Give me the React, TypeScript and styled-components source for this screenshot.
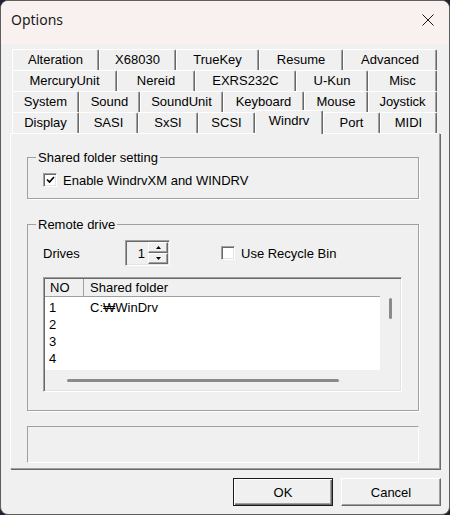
import React from 'react';
import styled, { createGlobalStyle } from 'styled-components';

const GlobalStyle = createGlobalStyle`
  html, body { margin: 0; padding: 0; background: #1b2233; }
  body { width: 450px; height: 515px; overflow: hidden; font-family: "Liberation Sans", Arial, sans-serif; }
  *, *::before, *::after { box-sizing: border-box; }
`;

const Window = styled.div`
  width: 450px;
  height: 515px;
  border: 1px solid #5e5e5e;
  border-radius: 8px;
  overflow: hidden;
  background: #f0f0f0;
  display: flex;
  flex-direction: column;
  color: #000;
  font-size: 13px;
  line-height: 15px;
`;

const TitleBar = styled.div`
  height: 43px;
  flex: none;
  background: #f9f1ef;
  display: flex;
  align-items: center;
  justify-content: space-between;
  padding: 0 15px 6px 10px;
`;

const Title = styled.div`
  font-family: "Noto Sans", "Open Sans", sans-serif;
  font-size: 14px;
  line-height: 18px;
  color: #1a1a1a;
`;

const CloseButton = styled.div`
  width: 12px;
  height: 12px;
  display: flex;
`;

const Body = styled.div`
  flex: 1;
  display: flex;
  flex-direction: column;
  padding: 5px 8px 0 9px;
`;

const TabStrip = styled.div`
  margin-left: 2px;
  width: 425px;
  display: flex;
  flex-direction: column;
`;

const TabRow = styled.div`
  display: flex;
  height: 21px;
  align-items: flex-start;
`;

const Tab = styled.div<{ $w: number; $selected?: boolean }>`
  width: ${(p) => p.$w}px;
  height: ${(p) => (p.$selected ? 24 : 21)}px;
  margin-top: ${(p) => (p.$selected ? -2 : 0)}px;
  position: ${(p) => (p.$selected ? 'relative' : 'static')};
  z-index: ${(p) => (p.$selected ? 1 : 'auto')};
  flex: none;
  background: #f0f0f0;
  border-top: 1px solid #fff;
  border-left: 1px solid #fff;
  border-right: 1px solid #696969;
  border-radius: 2px 2px 0 0;
  box-shadow: inset -1px 0 0 #a0a0a0;
  display: flex;
  align-items: center;
  justify-content: center;
  padding-bottom: ${(p) => (p.$selected ? 4 : 1)}px;
  white-space: nowrap;
`;

const TabPanel = styled.div`
  width: 430px;
  height: 336px;
  border-top: 1px solid #fff;
  border-left: 1px solid #fff;
  border-right: 1px solid #a0a0a0;
  border-bottom: 1px solid #a0a0a0;
  box-shadow: 1px 1px 0 #696969;
  padding: 16px 20px 5px 16px;
  display: flex;
  flex-direction: column;
`;

const GroupBox = styled.fieldset<{ $gap?: number }>`
  margin: ${(p) => p.$gap ?? 0}px 0 0 0;
  padding: 0;
  min-width: 0;
  border: 1px solid #a0a0a0;
  box-shadow: 1px 1px 0 #fff;
`;

const Legend = styled.legend`
  margin-left: 8px;
  padding: 0 2px;
  font-size: 13px;
  line-height: 15px;
`;

const GroupContent = styled.div<{ $pb: number }>`
  padding: 8px 0 ${(p) => p.$pb}px 15px;
  display: flex;
  flex-direction: column;
`;

const CheckRow = styled.label<{ $ml?: number }>`
  display: flex;
  align-items: center;
  gap: 6px;
  height: 14px;
  margin-left: ${(p) => p.$ml ?? 0}px;
  white-space: nowrap;
`;

const CheckBox = styled.span`
  width: 14px;
  height: 14px;
  flex: none;
  background: #fff;
  border: 1px solid;
  border-color: #a0a0a0 #fff #fff #a0a0a0;
  box-shadow: inset 1px 1px 0 #696969, inset -1px -1px 0 #e3e3e3;
  display: flex;
  align-items: center;
  justify-content: center;
`;

const DrivesRow = styled.div`
  display: flex;
  align-items: center;
  height: 26px;
`;

const FieldLabel = styled.span`
  width: 82px;
  flex: none;
`;

const SpinBox = styled.div`
  width: 45px;
  height: 26px;
  flex: none;
  border: 1px solid;
  border-color: #a0a0a0 #fff #fff #a0a0a0;
  box-shadow: inset 1px 1px 0 #696969, inset -1px -1px 0 #e3e3e3;
  background: #f0f0f0;
  padding: 1px;
  display: flex;
`;

const SpinValue = styled.div`
  flex: 1;
  text-align: right;
  padding-right: 3px;
  display: flex;
  align-items: center;
  justify-content: flex-end;
`;

const SpinButtons = styled.div`
  width: 20px;
  display: flex;
  flex-direction: column;
`;

const SpinButton = styled.div`
  flex: 1;
  background: #f0f0f0;
  border: 1px solid;
  border-color: #fff #696969 #696969 #fff;
  box-shadow: inset -1px -1px 0 #a0a0a0;
  display: flex;
  align-items: center;
  justify-content: center;
`;

const ListView = styled.div`
  margin-top: 11px;
  width: 359px;
  height: 115px;
  border: 1px solid;
  border-color: #a0a0a0 #fff #fff #a0a0a0;
  box-shadow: inset 1px 1px 0 #696969, inset -1px -1px 0 #e3e3e3;
  padding: 1px;
  background: #f0f0f0;
  display: grid;
  grid-template-columns: 1fr 20px;
  grid-template-rows: 1fr 20px;
`;

const ListContent = styled.div`
  display: flex;
  flex-direction: column;
  background: #fff;
  min-width: 0;
`;

const ListHeader = styled.div`
  height: 18px;
  flex: none;
  display: flex;
  background: #f0f0f0;
  border-bottom: 1px solid #a0a0a0;
`;

const HeaderCell = styled.div<{ $w?: number }>`
  ${(p) => (p.$w ? `width: ${p.$w}px; flex: none; border-right: 1px solid #a0a0a0;` : 'flex: 1;')}
  padding-left: ${(p) => (p.$w ? 5 : 6)}px;
  display: flex;
  align-items: center;
  white-space: nowrap;
`;

const ListRows = styled.div`
  padding-top: 2px;
  display: flex;
  flex-direction: column;
`;

const ListRow = styled.div`
  height: 17px;
  display: flex;
  align-items: center;
`;

const Cell = styled.div<{ $w?: number }>`
  ${(p) => (p.$w ? `width: ${p.$w}px; flex: none;` : 'flex: 1;')}
  padding-left: ${(p) => (p.$w ? 4 : 6)}px;
  white-space: nowrap;
`;

const VScroll = styled.div`
  display: flex;
  justify-content: center;
  padding-top: 19px;
`;

const VThumb = styled.div`
  width: 3px;
  height: 21px;
  border-radius: 2px;
  background: #8a8a8a;
`;

const HScroll = styled.div`
  grid-column: 1 / span 2;
  display: flex;
  align-items: center;
  padding-left: 22px;
`;

const HThumb = styled.div`
  width: 272px;
  height: 3px;
  border-radius: 2px;
  background: #8a8a8a;
`;

const StatusBox = styled.div`
  margin-top: 15px;
  height: 37px;
  border: 1px solid;
  border-color: #a0a0a0 #fff #fff #a0a0a0;
`;

const ButtonRow = styled.div`
  display: flex;
  justify-content: flex-end;
  gap: 8px;
  margin-top: 9px;
`;

const DialogButton = styled.div<{ $default?: boolean }>`
  width: 100px;
  height: 28px;
  background: #f0f0f0;
  display: flex;
  align-items: center;
  justify-content: center;
  border: 1px solid;
  border-color: ${(p) => (p.$default ? '#1a1a1a' : '#fff #696969 #696969 #fff')};
  box-shadow: ${(p) =>
    p.$default
      ? 'inset 1px 1px 0 #fff, inset -1px -1px 0 #696969, inset -2px -2px 0 #a0a0a0'
      : 'inset -1px -1px 0 #a0a0a0'};
`;

const tabRows: { label: string; w: number; selected?: boolean }[][] = [
  [
    { label: 'Alteration', w: 87 },
    { label: 'X68030', w: 77 },
    { label: 'TrueKey', w: 83 },
    { label: 'Resume', w: 84 },
    { label: 'Advanced', w: 94 },
  ],
  [
    { label: 'MercuryUnit', w: 105 },
    { label: 'Nereid', w: 78 },
    { label: 'EXRS232C', w: 101 },
    { label: 'U-Kun', w: 72 },
    { label: 'Misc', w: 69 },
  ],
  [
    { label: 'System', w: 67 },
    { label: 'Sound', w: 61 },
    { label: 'SoundUnit', w: 83 },
    { label: 'Keyboard', w: 81 },
    { label: 'Mouse', w: 64 },
    { label: 'Joystick', w: 69 },
  ],
  [
    { label: 'Display', w: 67 },
    { label: 'SASI', w: 59 },
    { label: 'SxSI', w: 60 },
    { label: 'SCSI', w: 57 },
    { label: 'Windrv', w: 68, selected: true },
    { label: 'Port', w: 57 },
    { label: 'MIDI', w: 57 },
  ],
];

const drives = [
  { no: '1', path: 'C:\u20A9WinDrv' },
  { no: '2', path: '' },
  { no: '3', path: '' },
  { no: '4', path: '' },
];

const CheckMark = () => (
  <svg width="9" height="8" viewBox="0 0 9 8">
    <path d="M1 3.5 L3.5 6 L8 1" fill="none" stroke="#000" strokeWidth="1.7" />
  </svg>
);

const Arrow = ({ up }: { up?: boolean }) => (
  <svg width="5" height="3" viewBox="0 0 5 3">
    <path d={up ? 'M0 3 L2.5 0 L5 3 Z' : 'M0 0 L2.5 3 L5 0 Z'} fill="#000" />
  </svg>
);

export default function App() {
  return (
    <>
      <GlobalStyle />
      <Window>
        <TitleBar>
          <Title>Options</Title>
          <CloseButton>
            <svg width="12" height="12" viewBox="0 0 12 12">
              <path d="M0.5 0.5 L11.5 11.5 M11.5 0.5 L0.5 11.5" stroke="#1a1a1a" strokeWidth="1" />
            </svg>
          </CloseButton>
        </TitleBar>
        <Body>
          <TabStrip>
            {tabRows.map((row, i) => (
              <TabRow key={i}>
                {row.map((t) => (
                  <Tab key={t.label} $w={t.w} $selected={t.selected}>
                    {t.label}
                  </Tab>
                ))}
              </TabRow>
            ))}
          </TabStrip>
          <TabPanel>
            <GroupBox>
              <Legend>Shared folder setting</Legend>
              <GroupContent $pb={11}>
                <CheckRow>
                  <CheckBox>
                    <CheckMark />
                  </CheckBox>
                  Enable WindrvXM and WINDRV
                </CheckRow>
              </GroupContent>
            </GroupBox>
            <GroupBox $gap={18}>
              <Legend>Remote drive</Legend>
              <GroupContent $pb={18}>
                <DrivesRow>
                  <FieldLabel>Drives</FieldLabel>
                  <SpinBox>
                    <SpinValue>1</SpinValue>
                    <SpinButtons>
                      <SpinButton>
                        <Arrow up />
                      </SpinButton>
                      <SpinButton>
                        <Arrow />
                      </SpinButton>
                    </SpinButtons>
                  </SpinBox>
                  <CheckRow $ml={51}>
                    <CheckBox />
                    Use Recycle Bin
                  </CheckRow>
                </DrivesRow>
                <ListView>
                  <ListContent>
                    <ListHeader>
                      <HeaderCell $w={39}>NO</HeaderCell>
                      <HeaderCell>Shared folder</HeaderCell>
                    </ListHeader>
                    <ListRows>
                      {drives.map((d) => (
                        <ListRow key={d.no}>
                          <Cell $w={39}>{d.no}</Cell>
                          <Cell>{d.path}</Cell>
                        </ListRow>
                      ))}
                    </ListRows>
                  </ListContent>
                  <VScroll>
                    <VThumb />
                  </VScroll>
                  <HScroll>
                    <HThumb />
                  </HScroll>
                </ListView>
              </GroupContent>
            </GroupBox>
            <StatusBox />
          </TabPanel>
          <ButtonRow>
            <DialogButton $default>OK</DialogButton>
            <DialogButton>Cancel</DialogButton>
          </ButtonRow>
        </Body>
      </Window>
    </>
  );
}
